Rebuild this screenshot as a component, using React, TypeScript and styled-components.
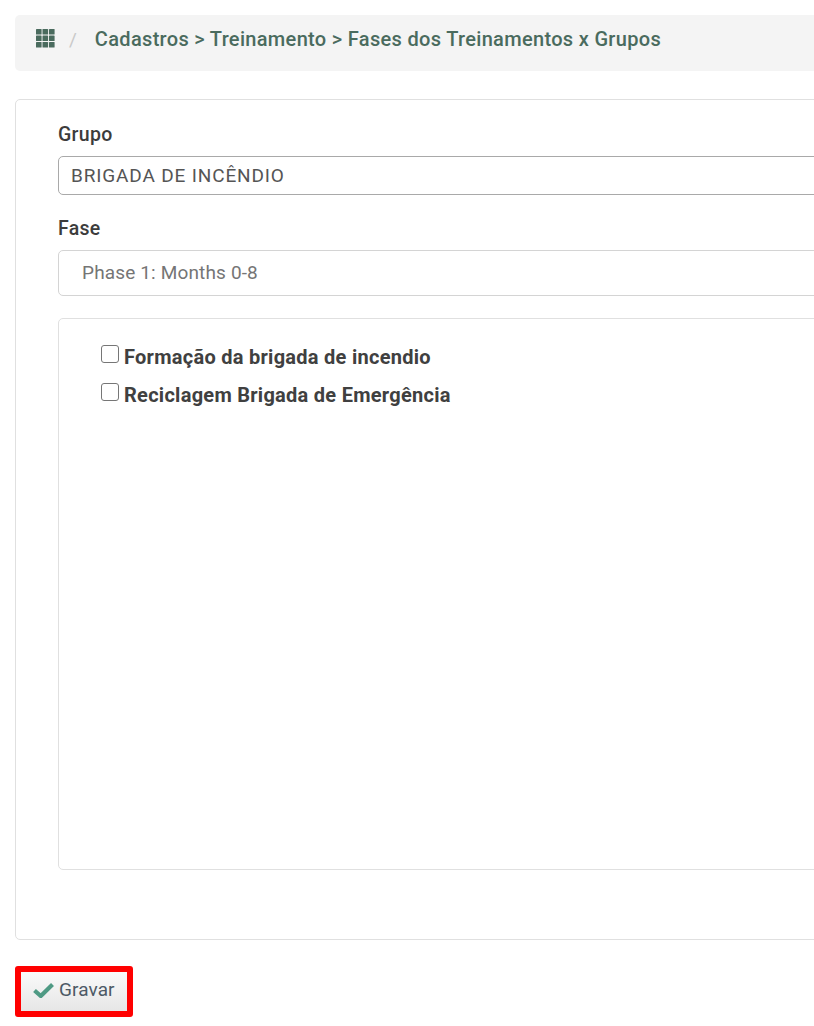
import React from "react";
import styled, { createGlobalStyle } from "styled-components";

const GlobalStyle = createGlobalStyle`
html, body {
  margin: 0;
  padding: 0;
  overflow: hidden;
  background: #ffffff;
  font-family: Roboto, "Liberation Sans", sans-serif;
}
`;

const fases = ["Formação da brigada de incendio", "Reciclagem Brigada de Emergência"];

function GridIcon() {
  return (
    <svg width="19" height="19" viewBox="0 0 19 19" fill="#4a6b5e">
      {[0, 6.5, 13].map((y) =>
        [0, 6.5, 13].map((x) => <rect key={`${x}-${y}`} x={x} y={y} width="5.6" height="5.6" rx="0.6" />)
      )}
    </svg>
  );
}

function CheckIcon() {
  return (
    <svg width="21" height="16" viewBox="0 0 21 16">
      <path d="M1.5 8.5 L7.8 14 L19.5 2.5" fill="none" stroke="#4f9a84" strokeWidth="4.2" />
    </svg>
  );
}

function App() {
  return (
    <Page>
      <GlobalStyle />
      <Breadcrumb>
        <GridIcon />
        <Slash>/</Slash>
        <Crumb>Cadastros &gt; Treinamento &gt; Fases dos Treinamentos x Grupos</Crumb>
      </Breadcrumb>
      <Panel>
        <Label>Grupo</Label>
        <GroupInput>BRIGADA DE INCÊNDIO</GroupInput>
        <Label>Fase</Label>
        <PhaseSelect>Phase 1: Months 0-8</PhaseSelect>
        <CheckPanel>
          {fases.map((fase) => (
            <CheckRow key={fase}>
              <Box type="checkbox" />
              <span>{fase}</span>
            </CheckRow>
          ))}
        </CheckPanel>
      </Panel>
      <SaveButton>
        <CheckIcon />
        Gravar
      </SaveButton>
    </Page>
  );
}

const Page = styled.div`
  box-sizing: border-box;
  width: 1000px;
  height: 1026px;
  padding: 15px 0 0 15px;
`;

const Breadcrumb = styled.div`
  display: flex;
  align-items: flex-start;
  box-sizing: border-box;
  height: 56px;
  padding: 14px 0 0 21px;
  background: #f4f4f4;
  border-radius: 5px;
`;

const Slash = styled.span`
  margin: 0 18px 0 14px;
  font-size: 19px;
  line-height: 21px;
  color: #c9c9c9;
`;

const Crumb = styled.span`
  font-size: 20px;
  font-weight: 500;
  letter-spacing: 0.32px;
  line-height: 21px;
  color: #4a6b5e;
`;

const Panel = styled.div`
  box-sizing: border-box;
  height: 841px;
  margin-top: 28px;
  padding: 24px 0 0 42px;
  background: #ffffff;
  border: 1px solid #e0e0e0;
  border-radius: 5px;
`;

const Label = styled.div`
  height: 22px;
  font-size: 19.5px;
  font-weight: 500;
  letter-spacing: 0.3px;
  line-height: 22px;
  color: #3c3c3c;
`;

const GroupInput = styled.div`
  box-sizing: border-box;
  height: 39px;
  margin: 10px 0 23px;
  padding-left: 12px;
  font-size: 19px;
  letter-spacing: 0.85px;
  line-height: 37px;
  color: #555555;
  border: 1px solid #a9a9a9;
  border-radius: 5px;
`;

const PhaseSelect = styled.div`
  box-sizing: border-box;
  height: 46px;
  margin: 10px 0 22px;
  padding-left: 23px;
  font-size: 19px;
  letter-spacing: 0.15px;
  line-height: 44px;
  color: #757575;
  border: 1px solid #d4d4d4;
  border-radius: 5px;
`;

const CheckPanel = styled.div`
  box-sizing: border-box;
  height: 552px;
  padding: 19px 0 0 42px;
  border: 1px solid #e0e0e0;
  border-radius: 5px;
`;

const CheckRow = styled.label`
  display: flex;
  align-items: center;
  gap: 5px;
  height: 38px;
  font-size: 20px;
  font-weight: 700;
  letter-spacing: 0.27px;
  color: #404040;
`;

const Box = styled.input`
  appearance: none;
  box-sizing: border-box;
  width: 18px;
  height: 18px;
  margin: -6px 0 0;
  background: #ffffff;
  border: 1px solid #767676;
  border-radius: 3px;
`;

const SaveButton = styled.button`
  display: flex;
  align-items: center;
  gap: 5px;
  box-sizing: border-box;
  width: 118px;
  height: 51px;
  margin-top: 26px;
  padding: 0 0 4px 12px;
  font-family: inherit;
  font-size: 19px;
  letter-spacing: 0.1px;
  color: #4d5a66;
  background: linear-gradient(#fafafa, #e6e6e6);
  border: 6px solid #ff0000;
  border-radius: 3px;
`;

export default App;
